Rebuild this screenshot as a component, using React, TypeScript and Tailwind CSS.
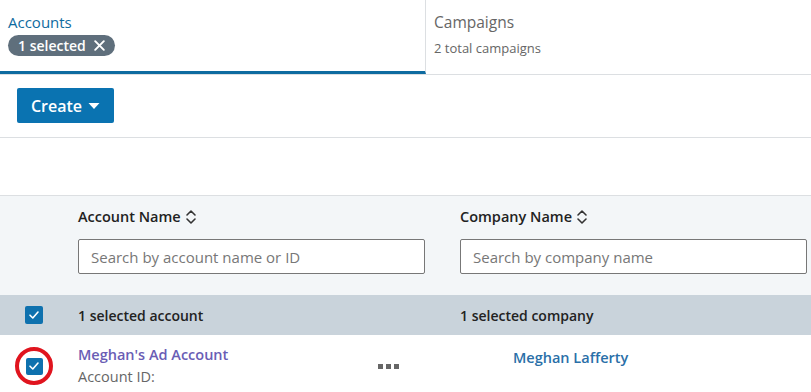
const font = { fontFamily: '"Open Sans", "Noto Sans", sans-serif' };

const SortIcon = () => (
  <svg width="12" height="18" viewBox="0 0 12 18" fill="none" stroke="#333" strokeWidth="1.6" strokeLinecap="round" strokeLinejoin="round" className="ml-1">
    <path d="M2 7l4-4 4 4M2 11l4 4 4-4" />
  </svg>
);

const Check = ({ small }: { small?: boolean }) => (
  <div className={`${small ? "w-[17px] h-[17px]" : "w-[18px] h-[18px]"} rounded-[2px] bg-[#0e71ae] flex items-center justify-center`}>
    <svg width="12" height="12" viewBox="0 0 12 12" fill="none" stroke="#fff" strokeWidth="1.6" strokeLinecap="round" strokeLinejoin="round">
      <path d="M2 6.2l2.8 2.8L10 3" />
    </svg>
  </div>
);

export default function App() {
  return (
    <div className="w-[811px] h-[392px] overflow-hidden bg-white text-[#222]" style={font}>
      {/* tabs */}
      <div className="flex h-[75px] border-b border-[#dcdfe2]">
        <div className="w-[426px] border-r border-[#dcdfe2] border-b-[3px] border-b-[#0e6ba0] px-2 pt-[12px]">
          <div className="text-[15px] leading-5 text-[#0e6ba0]">Accounts</div>
          <div className="mt-[3px] inline-flex items-center h-[21px] rounded-full bg-[#5f6f7c] pl-[10px] pr-[9px] text-white text-[14px] font-semibold">
            1 selected
            <svg width="13" height="13" viewBox="0 0 12 12" stroke="#fff" strokeWidth="1.8" strokeLinecap="round" className="ml-[7px]">
              <path d="M2 2l8 8M10 2l-8 8" />
            </svg>
          </div>
        </div>
        <div className="flex-1 px-2 pt-[12px]">
          <div className="text-[15.5px] leading-5 text-[#666]">Campaigns</div>
          <div className="mt-[8px] text-[13px] leading-4 text-[#666]">2 total campaigns</div>
        </div>
      </div>

      {/* toolbar */}
      <div className="h-[63px] border-b border-[#dcdfe2] pl-[17px] pt-[13px]">
        <button className="h-[35px] w-[97px] rounded-[2px] bg-[#0a73b1] text-white text-[16px] font-semibold flex items-center justify-center gap-[6px]">
          Create
          <svg width="12" height="8" viewBox="0 0 12 8" fill="#fff">
            <path d="M0.5 1h11L6 7z" />
          </svg>
        </button>
      </div>

      <div className="h-[58px] border-b border-[#dcdfe2]" />

      {/* header */}
      <div className="bg-[#f3f6f8] h-[99px] flex">
        <div className="w-[78px]" />
        <div className="w-[382px] pt-[11px]">
          <div className="flex items-center h-5 text-[14.5px] font-semibold text-[#222]">
            Account Name <SortIcon />
          </div>
          <input
            className="mt-[12px] w-[347px] h-[35px] border border-[#777] rounded-[2px] bg-white px-3 text-[15px] placeholder:text-[#777] outline-none"
            placeholder="Search by account name or ID"
          />
        </div>
        <div className="flex-1 pt-[11px]">
          <div className="flex items-center h-5 text-[14.5px] font-semibold text-[#222]">
            Company Name <SortIcon />
          </div>
          <input
            className="mt-[12px] w-[347px] h-[35px] border border-[#777] rounded-[2px] bg-white px-3 text-[15px] placeholder:text-[#777] outline-none"
            placeholder="Search by company name"
          />
        </div>
      </div>

      {/* selected row */}
      <div className="bg-[#c9d3db] h-[40px] flex items-center">
        <div className="w-[78px] pl-[25px]">
          <Check />
        </div>
        <div className="w-[382px] text-[14px] font-semibold text-[#222]">1 selected account</div>
        <div className="flex-1 text-[14px] font-semibold text-[#222]">1 selected company</div>
      </div>

      {/* data row */}
      <div className="flex pt-[10px]">
        <div className="w-[78px] pl-[15px] pt-[2px]">
          <div className="w-[38px] h-[38px] rounded-full border-[4px] border-[#e0141e] flex items-center justify-center">
            <Check small />
          </div>
        </div>
        <div className="w-[382px] flex">
          <div className="w-[300px]">
            <div className="text-[14.5px] leading-5 font-semibold text-[#6a5db5]">Meghan's Ad Account</div>
            <div className="text-[14.5px] leading-5 mt-[2px] text-[#666]">Account ID:</div>
          </div>
          <div className="pt-[19px] flex gap-[3px]">
            <span className="w-[5px] h-[5px] bg-[#666]" />
            <span className="w-[5px] h-[5px] bg-[#666]" />
            <span className="w-[5px] h-[5px] bg-[#666]" />
          </div>
        </div>
        <div className="flex-1 pl-[53px] pt-[3px] text-[14.5px] leading-5 font-semibold text-[#2a6fa8]">Meghan Lafferty</div>
      </div>
    </div>
  );
}
